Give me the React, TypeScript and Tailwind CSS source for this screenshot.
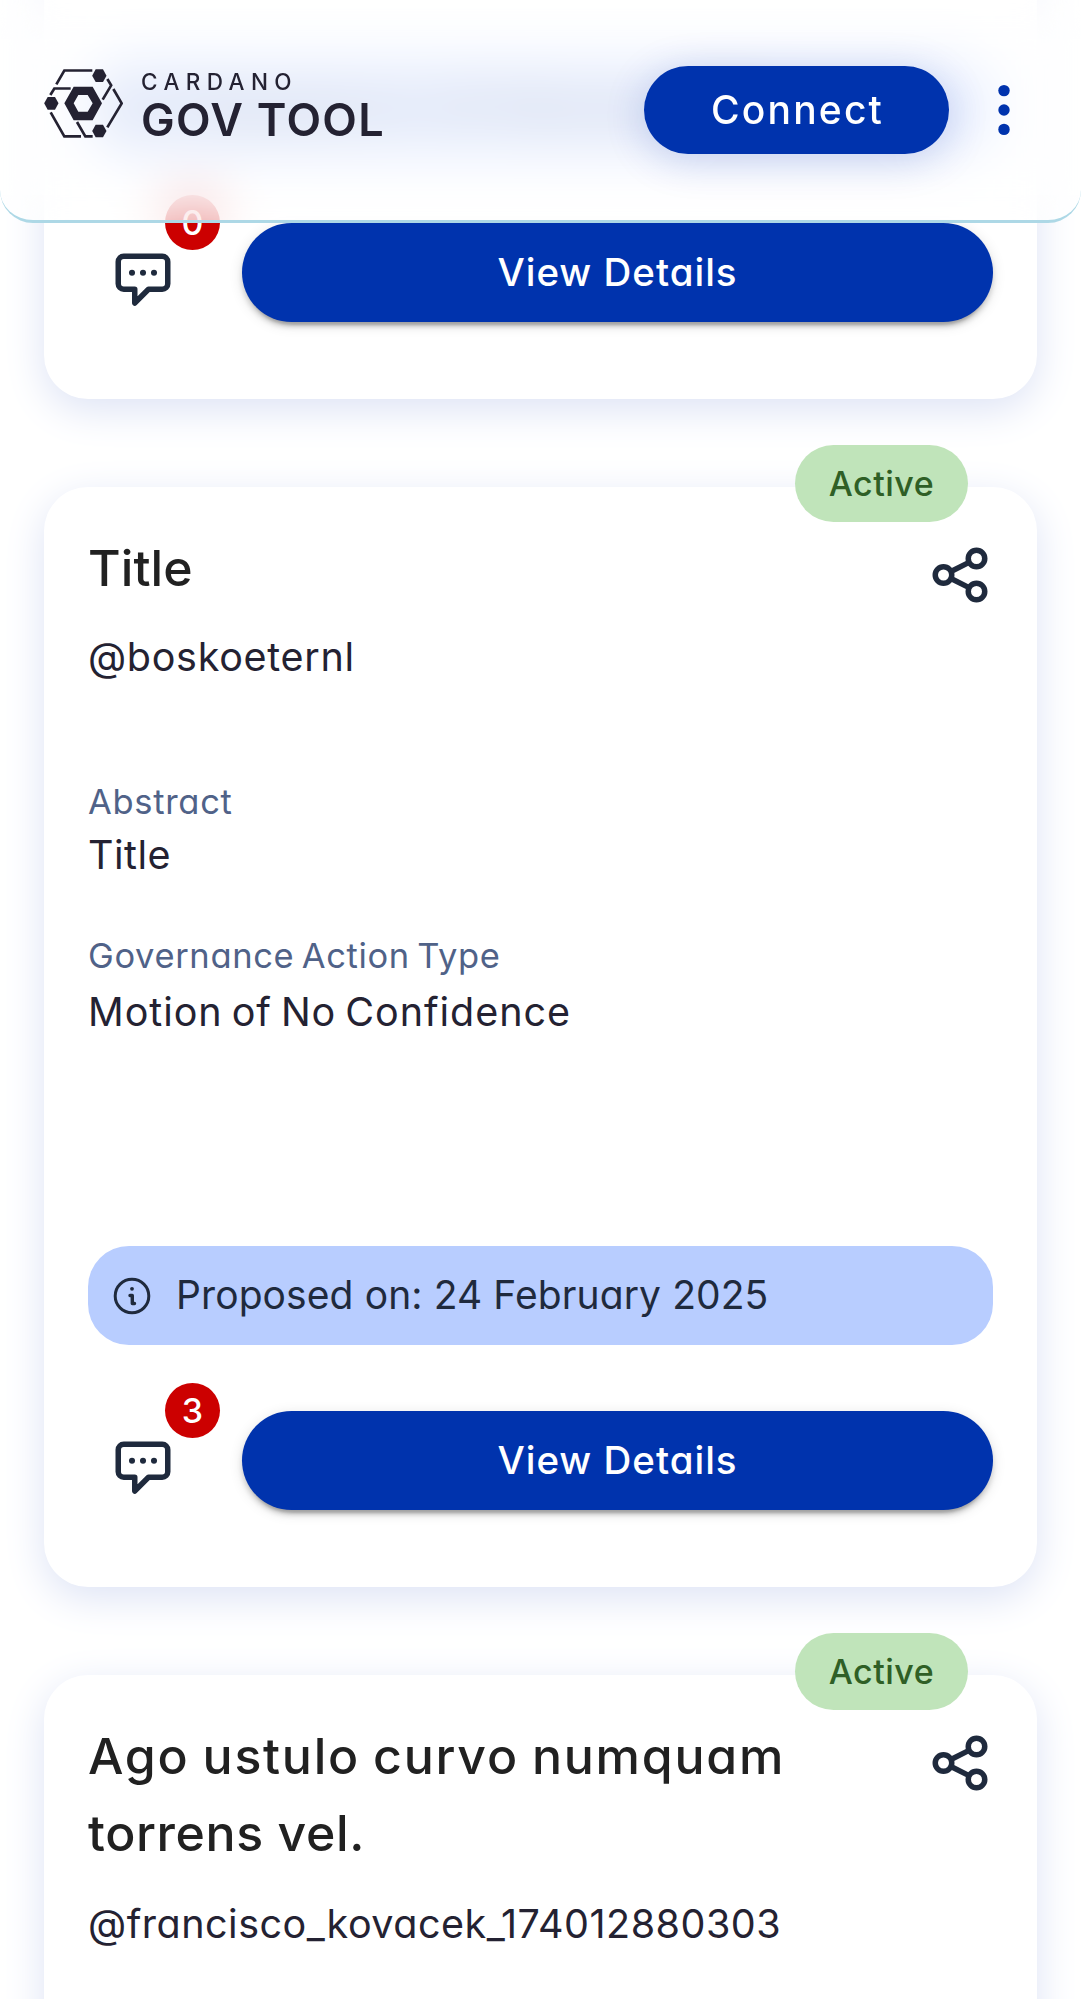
type Proposal = {
  titleLines: { text: string; className: string }[];
  author: string;
  authorClass: string;
  comments: number;
};

const proposals: Proposal[] = [
  { titleLines: [{ text: "Title", className: "tracking-[0.1px]" }], author: "@boskoeternl", authorClass: "mt-5 tracking-[0.7px]", comments: 0 },
  { titleLines: [{ text: "Title", className: "tracking-[0.1px]" }], author: "@boskoeternl", authorClass: "mt-5 tracking-[0.7px]", comments: 3 },
  {
    titleLines: [
      { text: "Ago ustulo curvo numquam", className: "tracking-[1.75px] [word-spacing:-2px]" },
      { text: "torrens vel.", className: "tracking-[0.6px]" },
    ],
    author: "@francisco_kovacek_174012880303",
    authorClass: "mt-[23px] tracking-[0.5px]",
    comments: 1,
  },
];

function Logo() {
  return (
    <svg className="h-[69px] w-[79px] shrink-0" viewBox="42 56 237 207" fill="#242232" stroke="none">
      <g fill="none" stroke="#242232" strokeWidth="8">
        <path d="M79 102 103 60.500H187" />
        <path d="M232 86 243.500 105 218 148" />
        <path d="M61 134 73 114.500H122" />
        <path d="M62 186 103 258H153" />
        <path d="M141 215 166 258H188" />
        <path d="M250 116 275 159 232 231" />
      </g>
      <path d="M197 57h22l10.500 19-10.500 19h-22l-10.500-19z" />
      <path d="M53 140h22l10.500 19L75 178H53l-10.500-19z" />
      <path d="M197 223h22l10.500 19-10.500 19h-22l-10.500-19z" />
      <path fillRule="evenodd" d="M131 109h57l28 50-28 51h-57l-28-51zM145 134l-14 25 14 25h28l15-25-15-25z" />
    </svg>
  );
}

function ShareIcon() {
  return (
    <svg className="mt-[12px] h-[66px] w-[66px] shrink-0" viewBox="0 0 24 24" fill="none" stroke="#1f2a3d" strokeWidth="2">
      <circle cx="6" cy="12" r="3" />
      <circle cx="18" cy="6" r="3" />
      <circle cx="18" cy="18" r="3" />
      <path d="m8.700 10.700 6.600-3.300M8.700 13.300l6.600 3.300" />
    </svg>
  );
}

function ChatIcon() {
  return (
    <svg className="h-[66px] w-[66px]" viewBox="0 0 24 24" fill="none" stroke="#1f2a3d" strokeWidth="2" strokeLinejoin="round">
      <path d="M5 3h14a2 2 0 0 1 2 2v8a2 2 0 0 1-2 2h-5l-5 5v-5H5a2 2 0 0 1-2-2V5a2 2 0 0 1 2-2z" />
      <g fill="#1f2a3d" stroke="none">
        <circle cx="8" cy="9" r="1.100" />
        <circle cx="12" cy="9" r="1.100" />
        <circle cx="16" cy="9" r="1.100" />
      </g>
    </svg>
  );
}

function InfoIcon() {
  return (
    <svg className="h-10 w-10 shrink-0" viewBox="0 0 40 40" fill="none" stroke="#1f2a3d" strokeWidth="3" strokeLinecap="round" strokeLinejoin="round">
      <circle cx="20" cy="20" r="16.800" />
      <path d="M18 19.500h2.300v8h2.200" strokeWidth="3.400" />
      <circle cx="20" cy="12.800" r="1.900" fill="#1f2a3d" stroke="none" />
    </svg>
  );
}

function Header() {
  return (
    <header className="fixed inset-x-0 top-0 z-20 h-[223px]">
      <div className="absolute inset-0 rounded-b-[33px] bg-white/70 backdrop-blur-[27px] [mask-image:linear-gradient(to_bottom,rgba(0,0,0,0.85),#000_25%,#000_70%,rgba(0,0,0,0.92))]" />
      <div className="absolute inset-0 rounded-b-[33px] border-b-[3px] border-[#add8e6]" />
      <div className="relative flex h-[220px] items-center justify-between pr-11 pl-11">
        <div className="-mt-[14px] flex items-center">
          <Logo />
          <div className="ml-[18px] flex flex-col pt-[5px] text-[#242232]">
            <span className="text-[22.5px] leading-[28px] font-medium tracking-[6.4px]">CARDANO</span>
            <span className="mt-px text-[45px] leading-[46px] font-semibold tracking-[1.3px]">GOV TOOL</span>
          </div>
        </div>
        <div className="flex items-center">
          <button className="h-[88px] w-[305px] rounded-full bg-[#0033ad] pl-[2px] text-[39px] font-medium tracking-[2.2px] text-white shadow-[0_6px_41px_rgba(0,51,173,0.2)]">
            Connect
          </button>
          <svg className="ml-[22px] h-[66px] w-[66px]" viewBox="0 0 66 66" fill="#0033ad">
            <circle cx="33" cy="13.600" r="5.700" />
            <circle cx="33" cy="33" r="5.700" />
            <circle cx="33" cy="52.400" r="5.700" />
          </svg>
        </div>
      </div>
    </header>
  );
}

function Card({ p }: { p: Proposal }) {
  return (
    <article className="relative flex h-[1100px] shrink-0 flex-col rounded-[44px] bg-white px-11 pt-[43px] pb-[77px] shadow-[0_11px_41px_#dde3f5]">
      <span className="absolute -top-[42px] right-[69px] flex h-[77px] w-[173px] items-center justify-center rounded-full bg-[#c0e4ba] text-[34px] font-medium tracking-[0.5px] text-[#2f5f26]">
        Active
      </span>
      <div className="flex items-start justify-between">
        <h2 className="text-[50px] leading-[77px] font-medium text-[#212121]">
          {p.titleLines.map((line) => (
            <span key={line.text} className={`block whitespace-nowrap ${line.className}`}>
              {line.text}
            </span>
          ))}
        </h2>
        <ShareIcon />
      </div>
      <p className={`text-[39.5px] leading-[58px] text-[#242232] ${p.authorClass}`}>{p.author}</p>
      <div className="mt-[94px] text-[34.5px] leading-[44px] tracking-[0.7px] text-[#506288]">Abstract</div>
      <div className="mt-[2px] text-[39.5px] leading-[58px] tracking-[0.5px] text-[#242232]">Title</div>
      <div className="mt-[50px] text-[34.5px] leading-[44px] tracking-[0.65px] text-[#506288] [word-spacing:-3px]">
        Governance Action Type
      </div>
      <div className="mt-[5px] text-[39.5px] leading-[58px] tracking-[0.95px] text-[#242232] [word-spacing:-3px]">
        Motion of No Confidence
      </div>
      <div className="mt-auto flex h-[99px] shrink-0 items-center gap-[24px] rounded-[41px] bg-[#b8cdff] pl-6 text-[39px] tracking-[0.1px] text-[#1f2a3d]">
        <InfoIcon />
        <span>Proposed on: 24 February 2025</span>
      </div>
      <div className="mt-[66px] flex h-[99px] shrink-0 items-center">
        <div className="relative ml-[22px] mt-[16px] h-[66px] w-[66px]">
          <ChatIcon />
          <span className="absolute -top-[53px] left-[55px] flex h-[55px] w-[55px] items-center justify-center rounded-full bg-[#cc0000] text-[34px] font-medium text-white">
            {p.comments}
          </span>
        </div>
        <button className="ml-[66px] h-[99px] flex-1 rounded-full bg-[#0033ad] pt-[1px] text-[38.5px] font-medium tracking-[1px] text-white shadow-[0_8px_3px_-5px_rgba(0,0,0,0.2),0_5px_5px_rgba(0,0,0,0.14),0_3px_14px_rgba(0,0,0,0.12)]">
          View Details
        </button>
      </div>
    </article>
  );
}

export default function App() {
  return (
    <div className="h-[1999px] overflow-hidden bg-white font-['Inter',sans-serif] [font-feature-settings:'cv11']">
      <Header />
      <main className="-mt-[701px] flex flex-col gap-[88px] px-11">
        {proposals.map((p, i) => (
          <Card key={i} p={p} />
        ))}
      </main>
    </div>
  );
}
